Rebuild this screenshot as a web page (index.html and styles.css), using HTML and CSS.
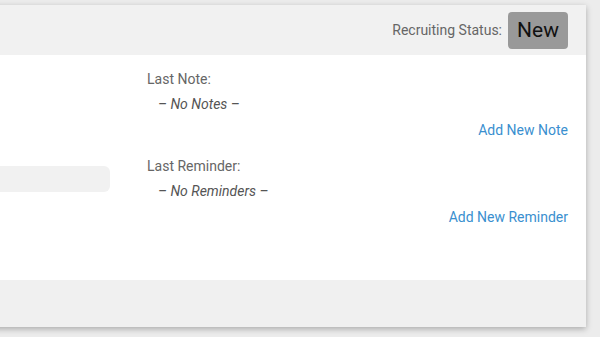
FILE: index.html
```html
<!DOCTYPE html>
<html lang="en">
<head>
    <meta charset="UTF-8">
    <meta name="viewport" content="width=device-width, initial-scale=1.0">
    <title>Candidate</title>
    <link rel="stylesheet" href="styles.css">
</head>
<body>
    <div class="card">
        <!-- Шапка карточки -->
        <div class="card-header">
            <span class="status-label">Recruiting Status:</span>
            <span class="status-badge">New</span>
        </div>

        <!-- Основное содержимое -->
        <div class="card-body">
            <div class="left-col">
                <div class="field"></div>
            </div>
            <div class="right-col">
                <div class="block">
                    <div class="block-label">Last Note:</div>
                    <div class="block-value">&ndash; No Notes &ndash;</div>
                    <a class="block-link" href="#">Add New Note</a>
                </div>
                <div class="block">
                    <div class="block-label">Last Reminder:</div>
                    <div class="block-value">&ndash; No Reminders &ndash;</div>
                    <a class="block-link" href="#">Add New Reminder</a>
                </div>
            </div>
        </div>

        <div class="card-footer"></div>
    </div>
</body>
</html>
```

FILE: styles.css
```css
/* Базовые стили */
body {
    font-family: Roboto, "Noto Sans", Arial, sans-serif;
    background-color: #ececec;
    margin: 0;
    padding: 5px 14px 10px 0;
    overflow: hidden;
}

/* Карточка */
.card {
    margin-left: -60px;
    background-color: #ffffff;
    box-shadow: 0 2px 6px rgba(0, 0, 0, 0.28);
}

.card-header {
    height: 50px;
    background-color: #f1f1f1;
    display: flex;
    justify-content: flex-end;
    align-items: center;
    gap: 6px;
    padding-right: 18px;
}

.status-label {
    font-size: 14px;
    color: #666666;
}

.status-badge {
    display: flex;
    align-items: center;
    justify-content: center;
    width: 60px;
    height: 37px;
    background-color: #999999;
    border-radius: 4px;
    color: #111111;
    font-size: 21px;
}

/* Тело карточки */
.card-body {
    height: 225px;
    display: flex;
    gap: 37px;
    padding-right: 18px;
}

.left-col {
    width: 170px;
    padding-top: 111px;
}

.field {
    height: 26px;
    background-color: #f1f1f1;
    border-radius: 6px;
}

.right-col {
    flex-grow: 1;
    padding-top: 14px;
    display: flex;
    flex-direction: column;
    gap: 16px;
}

.block {
    display: flex;
    flex-direction: column;
    line-height: 20px;
    font-size: 14px;
}

.block-label {
    color: #666666;
}

.block-value {
    margin-top: 5px;
    padding-left: 11px;
    font-style: italic;
    color: #555555;
}

.block-link {
    margin-top: 6px;
    align-self: flex-end;
    color: #3a8fcf;
    text-decoration: none;
}

/* Подвал */
.card-footer {
    height: 47px;
    background-color: #f0f0f0;
}
```
